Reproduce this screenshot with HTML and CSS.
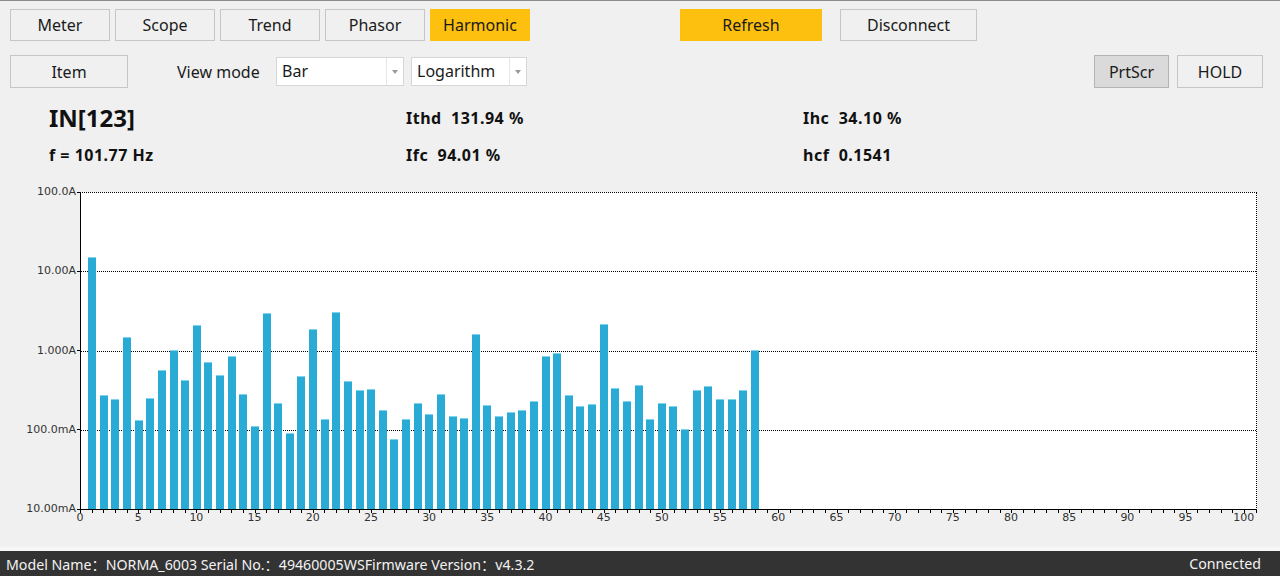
FILE: index.html
```html
<!DOCTYPE html>
<html>
<head>
<meta charset="utf-8">
<title>Harmonic</title>
<link rel="stylesheet" href="styles.css">
</head>
<body>
<div class="app">
  <div class="row1">
    <button class="btn tab">Meter</button>
    <button class="btn tab">Scope</button>
    <button class="btn tab">Trend</button>
    <button class="btn tab">Phasor</button>
    <button class="btn tab active">Harmonic</button>
    <button class="btn refresh active">Refresh</button>
    <button class="btn disconnect">Disconnect</button>
  </div>
  <div class="row2">
    <button class="btn item">Item</button>
    <span class="label">View mode</span>
    <div class="combo combo-bar"><span class="combo-text">Bar</span><span class="combo-arrow"><i></i></span></div>
    <div class="combo combo-log"><span class="combo-text">Logarithm</span><span class="combo-arrow"><i></i></span></div>
    <div class="spacer"></div>
    <button class="btn prtscr">PrtScr</button>
    <button class="btn hold">HOLD</button>
  </div>
  <div class="info">
    <div class="title">IN[123]</div>
    <div class="val">Ithd  131.94 %</div>
    <div class="val">Ihc  34.10 %</div>
    <div class="val">f = 101.77 Hz</div>
    <div class="val">Ifc  94.01 %</div>
    <div class="val">hcf  0.1541</div>
  </div>
  <div class="chart">
    <div class="yaxis">
      <div class="ylabel">100.0A</div>
      <div class="ylabel">10.00A</div>
      <div class="ylabel">1.000A</div>
      <div class="ylabel">100.0mA</div>
      <div class="ylabel">10.00mA</div>
    </div>
    <div class="plot-col">
      <div class="plot">
        <div class="grid">
          <div class="grow"></div>
          <div class="grow"></div>
          <div class="grow"></div>
          <div class="grow"></div>
        </div>
        <div class="bars">
          <div class="bar" style="height:252px"></div>
          <div class="bar" style="height:114px"></div>
          <div class="bar" style="height:110px"></div>
          <div class="bar" style="height:172px"></div>
          <div class="bar" style="height:89px"></div>
          <div class="bar" style="height:111px"></div>
          <div class="bar" style="height:139px"></div>
          <div class="bar" style="height:159px"></div>
          <div class="bar" style="height:129px"></div>
          <div class="bar" style="height:184px"></div>
          <div class="bar" style="height:147px"></div>
          <div class="bar" style="height:134px"></div>
          <div class="bar" style="height:153px"></div>
          <div class="bar" style="height:115px"></div>
          <div class="bar" style="height:83px"></div>
          <div class="bar" style="height:196px"></div>
          <div class="bar" style="height:106px"></div>
          <div class="bar" style="height:76px"></div>
          <div class="bar" style="height:133px"></div>
          <div class="bar" style="height:180px"></div>
          <div class="bar" style="height:90px"></div>
          <div class="bar" style="height:197px"></div>
          <div class="bar" style="height:128px"></div>
          <div class="bar" style="height:119px"></div>
          <div class="bar" style="height:120px"></div>
          <div class="bar" style="height:99px"></div>
          <div class="bar" style="height:70px"></div>
          <div class="bar" style="height:90px"></div>
          <div class="bar" style="height:106px"></div>
          <div class="bar" style="height:95px"></div>
          <div class="bar" style="height:115px"></div>
          <div class="bar" style="height:93px"></div>
          <div class="bar" style="height:91px"></div>
          <div class="bar" style="height:175px"></div>
          <div class="bar" style="height:104px"></div>
          <div class="bar" style="height:93px"></div>
          <div class="bar" style="height:97px"></div>
          <div class="bar" style="height:99px"></div>
          <div class="bar" style="height:108px"></div>
          <div class="bar" style="height:153px"></div>
          <div class="bar" style="height:156px"></div>
          <div class="bar" style="height:114px"></div>
          <div class="bar" style="height:103px"></div>
          <div class="bar" style="height:105px"></div>
          <div class="bar" style="height:185px"></div>
          <div class="bar" style="height:121px"></div>
          <div class="bar" style="height:108px"></div>
          <div class="bar" style="height:124px"></div>
          <div class="bar" style="height:90px"></div>
          <div class="bar" style="height:106px"></div>
          <div class="bar" style="height:103px"></div>
          <div class="bar" style="height:80px"></div>
          <div class="bar" style="height:119px"></div>
          <div class="bar" style="height:123px"></div>
          <div class="bar" style="height:110px"></div>
          <div class="bar" style="height:110px"></div>
          <div class="bar" style="height:119px"></div>
          <div class="bar" style="height:159px"></div>
        </div>
      </div>
      <div class="xticks"></div>
      <div class="xlabels">
        <span>0</span><span>5</span><span>10</span><span>15</span><span>20</span><span>25</span><span>30</span><span>35</span><span>40</span><span>45</span><span>50</span><span>55</span><span>60</span><span>65</span><span>70</span><span>75</span><span>80</span><span>85</span><span>90</span><span>95</span><span>100</span>
      </div>
    </div>
  </div>
  <div class="status">
    <span class="status-left">Model Name：NORMA_6003 Serial No.：49460005WSFirmware Version：v4.3.2</span>
    <span class="status-right">Connected</span>
  </div>
</div>
</body>
</html>
```

FILE: styles.css
```css
html, body {
  margin: 0;
  padding: 0;
}

body {
  background: #f0f0f0;
  font-family: "Noto Sans", "Noto Sans CJK SC", sans-serif;
  color: #1a1a1a;
}

.app {
  height: 576px;
  display: flex;
  flex-direction: column;
  border-top: 1px solid #8c8c8c;
  box-sizing: border-box;
  overflow: hidden;
}

/* ---------- buttons ---------- */
.btn {
  box-sizing: border-box;
  margin: 0;
  padding: 0;
  background: #f0f0f0;
  border: 1px solid #c6c6c6;
  font-family: "Noto Sans", "Noto Sans CJK SC", sans-serif;
  font-size: 16px;
  color: #1a1a1a;
  flex: none;
}

.btn.active {
  background: #fdc00f;
  border-color: #fdc00f;
}

.row1 {
  display: flex;
  gap: 5px;
  padding: 8px 0 0 10px;
}

.tab {
  width: 100px;
  height: 32px;
}

.refresh {
  width: 142px;
  height: 32px;
  margin-left: 145px;
}

.disconnect {
  width: 137px;
  height: 32px;
  margin-left: 13px;
}

.row2 {
  display: flex;
  align-items: center;
  margin-top: 14px;
  height: 33px;
  padding: 0 17px 0 10px;
}

.item {
  width: 118px;
  height: 33px;
}

.label {
  margin-left: 49px;
  width: 99px;
  font-size: 16px;
  flex: none;
}

.combo {
  box-sizing: border-box;
  height: 29px;
  background: #fff;
  border: 1px solid #d6d6d6;
  display: flex;
  align-items: stretch;
  flex: none;
}

.combo-bar {
  width: 128px;
}

.combo-log {
  width: 116px;
  margin-left: 7px;
}

.combo-text {
  flex: 1;
  font-size: 16px;
  line-height: 27px;
  padding-left: 5px;
}

.combo-arrow {
  width: 16px;
  border-left: 1px solid #e6e6e6;
  display: flex;
  align-items: center;
  justify-content: center;
}

.combo-arrow i {
  width: 0;
  height: 0;
  border-left: 3px solid transparent;
  border-right: 3px solid transparent;
  border-top: 4px solid #9a9a9a;
}

.spacer {
  flex: 1;
}

.prtscr {
  width: 75px;
  height: 33px;
  background: #dadada;
  border-color: #b4b4b4;
}

.hold {
  width: 86px;
  height: 33px;
  margin-left: 8px;
}

/* ---------- info ---------- */
.info {
  display: grid;
  grid-template-columns: 357px 397px 1fr;
  grid-template-rows: 30px 22px;
  row-gap: 11px;
  align-items: center;
  padding: 15px 0 0 49px;
  white-space: pre;
  font-weight: 700;
  color: #111;
}

.title {
  font-size: 24px;
  line-height: 30px;
}

.val {
  font-size: 16px;
  line-height: 22px;
  letter-spacing: 0.5px;
}

/* ---------- chart ---------- */
.chart {
  display: flex;
  align-items: flex-start;
  padding-top: 26px;
  font-family: "DejaVu Sans", sans-serif;
  font-size: 11px;
  color: #333;
}

.yaxis {
  width: 80px;
  height: 329px;
  margin-top: -6px;
  flex: none;
  display: flex;
  flex-direction: column;
  justify-content: space-between;
}

.ylabel {
  height: 12px;
  line-height: 12px;
  display: flex;
  justify-content: flex-end;
  align-items: center;
}

.ylabel::after {
  content: "";
  width: 3px;
  height: 1px;
  margin-left: 1px;
  background: #000;
}

.plot-col {
  width: 1177px;
  flex: none;
}

.plot {
  position: relative;
  box-sizing: border-box;
  height: 318px;
  background: #fff;
  border-left: 1px solid #000;
  border-bottom: 1px solid #000;
  border-top: 1px dotted #000;
  border-right: 1px dotted #000;
}

.grid {
  height: 100%;
  display: flex;
  flex-direction: column;
}

.grow {
  flex: 1;
  box-sizing: border-box;
  border-bottom: 1px dotted #000;
}

.grow:last-child {
  border-bottom: none;
}

.bars {
  position: absolute;
  left: 0;
  top: 0;
  bottom: 0;
  display: flex;
  align-items: flex-end;
  gap: 3.64px;
  padding-left: 7.2px;
}

.bar {
  width: 8px;
  flex: none;
  background: #2aabd6;
  box-shadow: inset 0 1px 0 #7fd3ee;
}

.xticks {
  height: 3px;
  background: repeating-linear-gradient(to right, #000 0, #000 1px, transparent 1px, transparent 11.64px);
}

.xlabels {
  display: flex;
  margin-left: -29.1px;
  margin-top: -2px;
  line-height: 13px;
}

.xlabels span {
  width: 58.2px;
  flex: none;
  text-align: center;
}

/* ---------- status ---------- */
.status {
  margin-top: auto;
  height: 25px;
  flex: none;
  background: #333;
  color: #f2f2f2;
  display: flex;
  align-items: center;
  justify-content: space-between;
  padding: 0 19px 0 6px;
  font-size: 14.2px;
  box-shadow: 0 -4px 0 #f7f7f7;
}
```
